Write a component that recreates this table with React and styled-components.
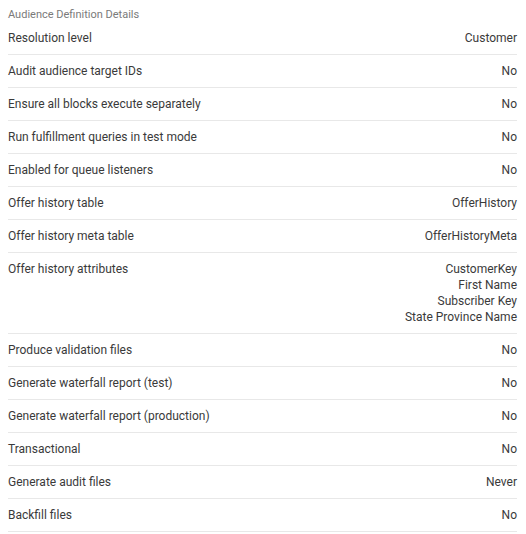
import React from "react";
import styled, { createGlobalStyle } from "styled-components";

const GlobalStyle = createGlobalStyle`
  html, body {
    margin: 0;
    padding: 0;
    background: #fff;
  }
  body {
    font-family: Roboto, "Noto Sans", Arial, sans-serif;
  }
`;

const Panel = styled.section`
  padding: 8px 9px 0 8px;
`;

const Title = styled.h2`
  margin: 0;
  font-size: 11px;
  font-weight: 400;
  line-height: 14px;
  color: #7a7a7a;
`;

const List = styled.div`
  display: flex;
  flex-direction: column;
`;

const Row = styled.div`
  display: flex;
  justify-content: space-between;
  align-items: flex-start;
  padding: 8px 0;
  border-bottom: 1px solid #e8e8e8;
  font-size: 12px;
  line-height: 16px;
  color: #3a3a3a;
`;

const Label = styled.span``;

const Value = styled.div`
  display: flex;
  flex-direction: column;
  align-items: flex-end;
  text-align: right;
`;

const details = [
  ["Resolution level", "Customer"],
  ["Audit audience target IDs", "No"],
  ["Ensure all blocks execute separately", "No"],
  ["Run fulfillment queries in test mode", "No"],
  ["Enabled for queue listeners", "No"],
  ["Offer history table", "OfferHistory"],
  ["Offer history meta table", "OfferHistoryMeta"],
  [
    "Offer history attributes",
    ["CustomerKey", "First Name", "Subscriber Key", "State Province Name"],
  ],
  ["Produce validation files", "No"],
  ["Generate waterfall report (test)", "No"],
  ["Generate waterfall report (production)", "No"],
  ["Transactional", "No"],
  ["Generate audit files", "Never"],
  ["Backfill files", "No"],
];

export default function App() {
  return (
    <>
      <GlobalStyle />
      <Panel>
        <Title>Audience Definition Details</Title>
        <List>
          {details.map(([label, value]) => (
            <Row key={label}>
              <Label>{label}</Label>
              <Value>
                {[value].flat().map((v) => (
                  <span key={v}>{v}</span>
                ))}
              </Value>
            </Row>
          ))}
        </List>
      </Panel>
    </>
  );
}
